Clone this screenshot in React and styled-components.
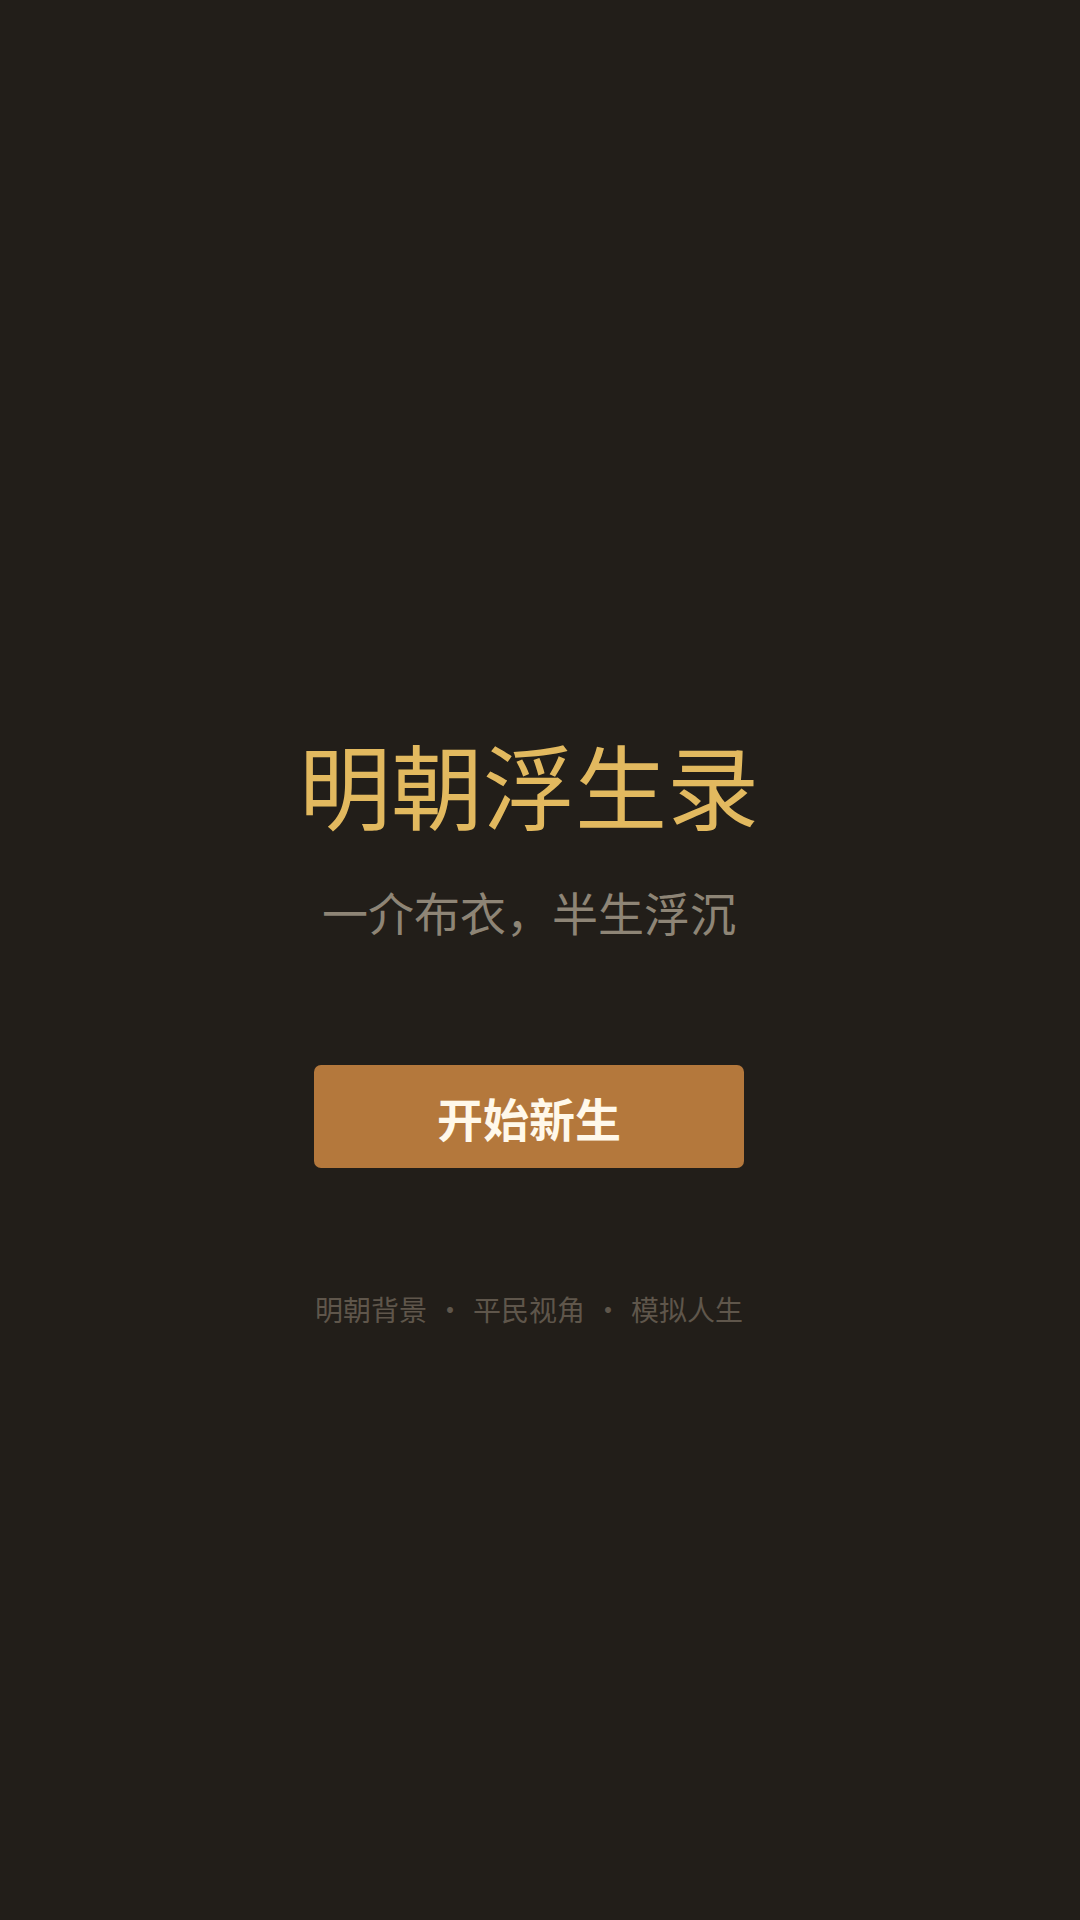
import styled, { createGlobalStyle } from "styled-components";

const GlobalStyle = createGlobalStyle`
  html, body {
    margin: 0;
    padding: 0;
    background: #221e19;
  }
  body {
    font-family: "Noto Sans CJK SC", "Noto Sans", sans-serif;
  }
`;

const Screen = styled.div`
  min-height: 1920px;
  display: flex;
  flex-direction: column;
  align-items: center;
  padding: 737px 22px 0 0;
  box-sizing: border-box;
  background: #221e19;
`;

const Title = styled.h1`
  margin: 0;
  font-size: 92px;
  line-height: 1;
  font-weight: 400;
  color: #e2b95f;
`;

const Subtitle = styled.p`
  margin: 59px 0 0;
  font-size: 46px;
  line-height: 1;
  color: #8e8576;
`;

const StartButton = styled.button`
  margin-top: 131px;
  width: 430px;
  height: 103px;
  border: none;
  border-radius: 7px;
  background: #b4783c;
  color: #fff8ea;
  font-family: inherit;
  font-size: 46px;
  font-weight: 700;
  cursor: pointer;
`;

const Tags = styled.div`
  margin-top: 127px;
  font-size: 28px;
  line-height: 1;
  color: #5f564b;
  display: flex;
  align-items: center;
`;

const Dot = styled.span`
  margin: 0 9px;
`;

const tags = ["明朝背景", "平民视角", "模拟人生"];

export default function App() {
  return (
    <>
      <GlobalStyle />
      <Screen>
        <Title>明朝浮生录</Title>
        <Subtitle>一介布衣，半生浮沉</Subtitle>
        <StartButton>开始新生</StartButton>
        <Tags>
          {tags.map((t, i) => (
            <span key={t}>
              {i > 0 && <Dot>·</Dot>}
              {t}
            </span>
          ))}
        </Tags>
      </Screen>
    </>
  );
}
